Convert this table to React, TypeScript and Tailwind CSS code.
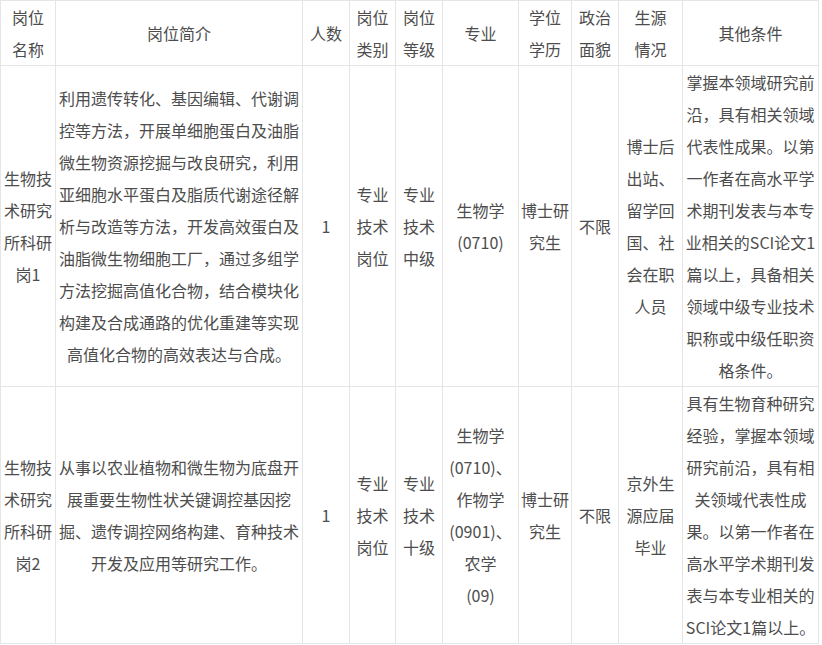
import React from 'react';

const header: string[][] = [
  ['岗位', '名称'],
  ['岗位简介'],
  ['人数'],
  ['岗位', '类别'],
  ['岗位', '等级'],
  ['专业'],
  ['学位', '学历'],
  ['政治', '面貌'],
  ['生源', '情况'],
  ['其他条件'],
];

const rows: string[][][] = [
  [
    ['生物技', '术研究', '所科研', '岗1'],
    [
      '利用遗传转化、基因编辑、代谢调',
      '控等方法，开展单细胞蛋白及油脂',
      '微生物资源挖掘与改良研究，利用',
      '亚细胞水平蛋白及脂质代谢途径解',
      '析与改造等方法，开发高效蛋白及',
      '油脂微生物细胞工厂，通过多组学',
      '方法挖掘高值化合物，结合模块化',
      '构建及合成通路的优化重建等实现',
      '高值化合物的高效表达与合成。',
    ],
    ['1'],
    ['专业', '技术', '岗位'],
    ['专业', '技术', '中级'],
    ['生物学', '(0710)'],
    ['博士研', '究生'],
    ['不限'],
    ['博士后', '出站、', '留学回', '国、社', '会在职', '人员'],
    [
      '掌握本领域研究前',
      '沿，具有相关领域',
      '代表性成果。以第',
      '一作者在高水平学',
      '术期刊发表与本专',
      '业相关的SCI论文1',
      '篇以上，具备相关',
      '领域中级专业技术',
      '职称或中级任职资',
      '格条件。',
    ],
  ],
  [
    ['生物技', '术研究', '所科研', '岗2'],
    [
      '从事以农业植物和微生物为底盘开',
      '展重要生物性状关键调控基因挖',
      '掘、遗传调控网络构建、育种技术',
      '开发及应用等研究工作。',
    ],
    ['1'],
    ['专业', '技术', '岗位'],
    ['专业', '技术', '十级'],
    ['生物学', '(0710)、', '作物学', '(0901)、', '农学', '(09)'],
    ['博士研', '究生'],
    ['不限'],
    ['京外生', '源应届', '毕业'],
    [
      '具有生物育种研究',
      '经验，掌握本领域',
      '研究前沿，具有相',
      '关领域代表性成',
      '果。以第一作者在',
      '高水平学术期刊发',
      '表与本专业相关的',
      'SCI论文1篇以上。',
    ],
  ],
];

const widths = [55, 247, 47, 46, 47, 76, 53, 47, 64, 136];

const Lines = ({ lines }: { lines: string[] }) => (
  <>
    {lines.map((l, i) => (
      <React.Fragment key={i}>
        {i > 0 && <br />}
        {l}
      </React.Fragment>
    ))}
  </>
);

const cell =
  'border border-[#e5e5e5] px-[2px] py-0 text-center align-middle whitespace-nowrap overflow-visible';

export default function App() {
  return (
    <div className="w-[822px] h-[645px] bg-white overflow-hidden">
      <table
        className="border-collapse table-fixed w-[819px] text-[16px] leading-8 text-[#4d4d4d]"
        style={{ fontFamily: '"Noto Sans CJK SC", "Microsoft YaHei", sans-serif' }}
      >
        <colgroup>
          {widths.map((w, i) => (
            <col key={i} style={{ width: w }} />
          ))}
        </colgroup>
        <thead>
          <tr>
            {header.map((h, i) => (
              <th key={i} className={`${cell} font-normal`}>
                <Lines lines={h} />
              </th>
            ))}
          </tr>
        </thead>
        <tbody>
          {rows.map((r, ri) => (
            <tr key={ri}>
              {r.map((c, ci) => (
                <td key={ci} className={cell}>
                  <Lines lines={c} />
                </td>
              ))}
            </tr>
          ))}
        </tbody>
      </table>
    </div>
  );
}
